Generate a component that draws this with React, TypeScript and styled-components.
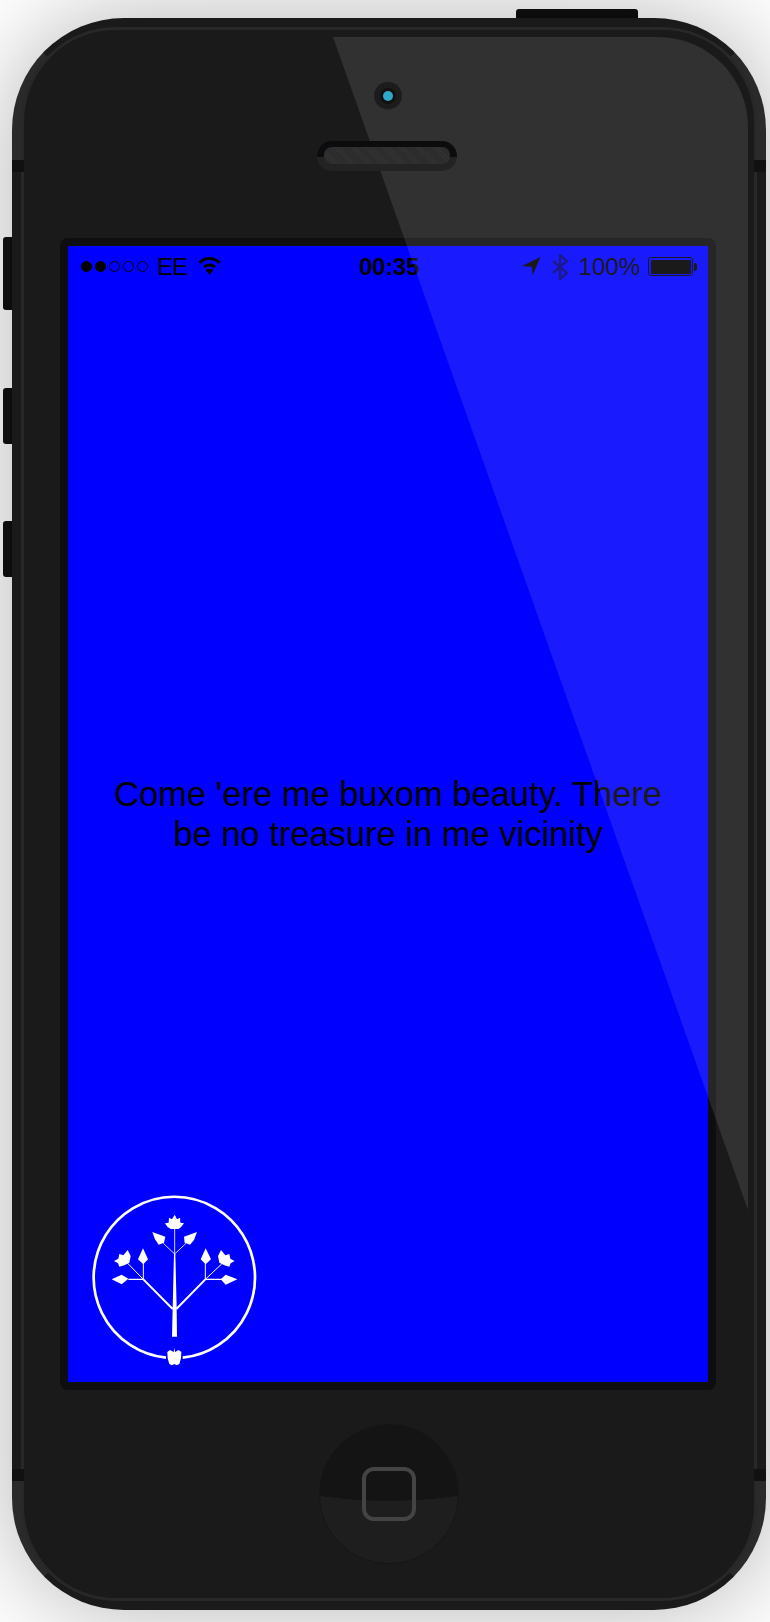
import React from 'react'
import styled, { createGlobalStyle } from 'styled-components'

const GlobalStyle = createGlobalStyle`
  html, body {
    margin: 0;
    padding: 0;
    background: #fff;
  }
`
const Page = styled.div`
  width: 770px;
  height: 1622px;
  overflow: hidden;
  padding-top: 9px;
  box-sizing: border-box;
  font-family: "Liberation Sans", Arial, sans-serif;
  color: #000;
`
const TopButton = styled.div`
  width: 122px;
  height: 9px;
  margin-left: 516px;
  background: #0f0f0f;
  border-radius: 3px 3px 0 0;
`
const DeviceRow = styled.div`
  display: flex;
`
const SideButtons = styled.div`
  position: relative;
  z-index: 1;
  width: 9px;
  margin-left: 3px;
  padding-top: 219px;
  display: flex;
  flex-direction: column;
`
const SideButton = styled.div<{ $h: number; $gap: number }>`
  height: ${p => p.$h}px;
  margin-bottom: ${p => p.$gap}px;
  background: #0d0d0d;
  border-radius: 3px 0 0 3px;
`
const Shell = styled.div`
  position: relative;
  width: 754px;
  height: 1592px;
  box-sizing: border-box;
  padding: 9px;
  border-radius: 112px;
  box-shadow: 0 0 100px rgba(0, 0, 0, 0.3);
  background-color: #1a1a1a;
  background-repeat: no-repeat;
  background-image:
    linear-gradient(45deg, #2a2a2a 98px, transparent 98px),
    linear-gradient(-45deg, #2a2a2a 98px, transparent 98px),
    linear-gradient(135deg, #2a2a2a 90px, transparent 90px),
    linear-gradient(-135deg, #2a2a2a 90px, transparent 90px);
  background-size: 120px 142px, 120px 142px, 120px 129px, 120px 129px;
  background-position: left top, right top, left bottom, right bottom;
`
const Notch = styled.div<{ $side: 'left' | 'right'; $top: number }>`
  position: absolute;
  ${p => p.$side}: 0;
  top: ${p => p.$top}px;
  width: 12px;
  height: 12px;
  background: #111;
`
const Rail = styled.div`
  height: 100%;
  box-sizing: border-box;
  border: 3px solid #282828;
  border-radius: 95px;
`
const Face = styled.div`
  position: relative;
  height: 100%;
  border-radius: 92px;
  background: #1a1a1a;
  display: flex;
  flex-direction: column;
  align-items: flex-start;
  padding-top: 52px;
  box-sizing: border-box;
`
const Camera = styled.div`
  position: relative;
  z-index: 1;
  width: 28px;
  height: 28px;
  margin-left: 350px;
  border-radius: 50%;
  background: #1c1c1c;
  border-bottom: 1px solid #2c2c2c;
  box-sizing: border-box;
  display: flex;
  align-items: center;
  justify-content: center;
`
const Lens = styled.div`
  width: 10px;
  height: 10px;
  border-radius: 50%;
  background: #2fa8c8;
  box-shadow: 0 0 0 3px #111;
`
const Speaker = styled.div`
  position: relative;
  z-index: 1;
  width: 140px;
  height: 30px;
  margin: 31px 0 0 293px;
  padding: 6px 7px 7px;
  box-sizing: border-box;
  border-radius: 15px;
  background: linear-gradient(#0c0c0e 16px, #232323 16px);
`
const Grille = styled.div`
  height: 17px;
  border-radius: 8px;
  background: repeating-linear-gradient(45deg, #2a2a2a 0 1px, #323232 1px 2px);
`
const Bezel = styled.div`
  width: 640px;
  height: 1136px;
  margin: 67px 0 0 36px;
  padding: 8px;
  border-radius: 8px;
  background: #0e0e10;
`
const Screen = styled.div`
  width: 640px;
  height: 1136px;
  background: #00f;
  display: grid;
  grid-template-rows: 1fr auto 1fr;
`
const StatusBar = styled.div`
  height: 41px;
  display: grid;
  grid-template-columns: 1fr auto 1fr;
  align-items: center;
  padding: 0 11px 0 13px;
  font-size: 24px;
`
const StatusLeft = styled.div`
  display: flex;
  align-items: center;
`
const StatusRight = styled.div`
  display: flex;
  align-items: center;
  justify-content: flex-end;
`
const Dot = styled.span<{ $on?: boolean }>`
  width: 11px;
  height: 11px;
  box-sizing: border-box;
  margin-right: 3px;
  border-radius: 50%;
  border: 1px solid #000;
  background: ${p => (p.$on ? '#000' : 'transparent')};
`
const Carrier = styled.span`
  margin: 0 11px 0 6px;
  letter-spacing: -1px;
`
const Time = styled.span`
  font-weight: bold;
  letter-spacing: -0.3px;
`
const Bluetooth = styled.svg`
  margin-left: 11px;
`
const Percent = styled.span`
  margin: 0 8px 0 11px;
`
const Battery = styled.div`
  width: 45px;
  height: 19px;
  box-sizing: border-box;
  padding: 1.5px;
  border: 1px solid #000;
  border-radius: 3px;
  margin-right: 1px;
`
const BatteryFill = styled.div`
  height: 100%;
  border-radius: 1px;
  background: #000;
`
const BatteryNub = styled.div`
  width: 3px;
  height: 8px;
  background: #000;
  border-radius: 0 2px 2px 0;
`
const Message = styled.div`
  padding: 0 40px;
  font-size: 34.5px;
  line-height: 40px;
  text-align: center;
`
const LogoSlot = styled.div`
  align-self: end;
  padding: 0 0 2px 12px;
  svg {
    display: block;
  }
`
const HomeButton = styled.div`
  width: 140px;
  height: 140px;
  margin: 34px 0 0 295px;
  border-radius: 50%;
  box-sizing: border-box;
  border: 1px solid #161616;
  background: radial-gradient(ellipse 196px 76px at 50% 0, #141414 99.5%, #1e1e1e 100%);
  display: flex;
  align-items: center;
  justify-content: center;
`
const HomeSquare = styled.div`
  width: 54px;
  height: 54px;
  box-sizing: border-box;
  border: 4px solid #444;
  border-radius: 12px;
`
const Glare = styled.div`
  position: absolute;
  top: 7px;
  left: 309px;
  width: 415px;
  height: 1173px;
  background: rgba(255, 255, 255, 0.1);
  border-top-right-radius: 90px;
  clip-path: polygon(0 0, 100% 0, 100% 100%);
  pointer-events: none;
`

const WifiIcon = () => (
  <svg width="23" height="19" viewBox="0 0 23 19">
    <path d="M1.5 5.7A14 14 0 0 1 21.5 5.7" fill="none" stroke="#000" strokeWidth="3" />
    <path d="M6 10A8.5 8.5 0 0 1 17 10" fill="none" stroke="#000" strokeWidth="3" />
    <path d="M7.5 12.8Q11.5 10.8 15.5 12.8L11.5 18Z" fill="#000" />
  </svg>
)

const LocationIcon = () => (
  <svg width="19" height="19" viewBox="0 0 19 19">
    <path d="M18.5 0L0 9L9.7 9.7L10.5 18.5Z" fill="#000" />
  </svg>
)

const BluetoothIcon = () => (
  <Bluetooth width="16" height="26" viewBox="0 0 16 26">
    <path
      d="M1 7L15 19L8 25V1L15 7L1 19"
      fill="none"
      stroke="#000"
      strokeOpacity="0.5"
      strokeWidth="2.5"
    />
  </Bluetooth>
)

const TreeLogo = () => (
  <svg width="190" height="200" viewBox="0 0 570 600" fill="#fff">
    <path d="M258 533A242 242 0 1 1 308 533" fill="none" stroke="#fff" strokeWidth="8" />
    <path d="M276 470H291L290 385L286 222H282L278 385Z" />
    <g fill="none" stroke="#fff">
      <path d="M284 145V222M284 222L250 190M284 222L318 190" strokeWidth="2.5" />
      <path d="M278 387L190 298M289 387L376 298" strokeWidth="6" />
      <path d="M190 298V250M190 298L143 250M376 298V250M376 298L425 252" strokeWidth="3" />
      <path d="M190 298H145M376 298H425" strokeWidth="3.5" />
    </g>
    <path d="M284 104L291 118L300 113L301 128L312 130L304 140L296 147H272L262 140L255 130L266 128L267 113L276 118Z" />
    <path d="M217 156L256 170L252 188L236 194L225 178Z" />
    <path d="M351 156L342 180L330 194L314 188L312 170Z" />
    <path d="M189 205L204 238L190 253L174 238Z" />
    <path d="M377 205L393 238L377 253L362 238Z" />
    <path d="M95 298L125 284L145 296L125 313Z" />
    <path d="M472 298L437 284L422 298L437 314Z" />
    <path d="M143 210L152 228L148 248L133 256L118 260L114 250L102 243L115 236L118 222L130 226Z" />
    <path d="M423 210L414 228L418 248L433 256L448 260L452 250L464 243L451 236L448 222L436 226Z" />
    <path d="M283 503L285 516L296 510L304 516L303 535L298 552L290 556L283 552L276 556L268 552L263 535L262 516L270 510L281 516Z" />
  </svg>
)

const App: React.FC = () => (
  <Page>
    <GlobalStyle />
    <TopButton />
    <DeviceRow>
      <SideButtons>
        <SideButton $h={73} $gap={78} />
        <SideButton $h={56} $gap={77} />
        <SideButton $h={56} $gap={0} />
      </SideButtons>
      <Shell>
        <Rail>
          <Face>
            <Camera>
              <Lens />
            </Camera>
            <Speaker>
              <Grille />
            </Speaker>
            <Bezel>
              <Screen>
                <StatusBar>
                  <StatusLeft>
                    <Dot $on />
                    <Dot $on />
                    <Dot />
                    <Dot />
                    <Dot />
                    <Carrier>EE</Carrier>
                    <WifiIcon />
                  </StatusLeft>
                  <Time>00:35</Time>
                  <StatusRight>
                    <LocationIcon />
                    <BluetoothIcon />
                    <Percent>100%</Percent>
                    <Battery>
                      <BatteryFill />
                    </Battery>
                    <BatteryNub />
                  </StatusRight>
                </StatusBar>
                <Message>Come 'ere me buxom beauty. There be no treasure in me vicinity</Message>
                <LogoSlot>
                  <TreeLogo />
                </LogoSlot>
              </Screen>
            </Bezel>
            <HomeButton>
              <HomeSquare />
            </HomeButton>
            <Glare />
          </Face>
        </Rail>
        <Notch $side="left" $top={142} />
        <Notch $side="right" $top={142} />
        <Notch $side="left" $top={1451} />
        <Notch $side="right" $top={1451} />
      </Shell>
    </DeviceRow>
  </Page>
)

export default App
